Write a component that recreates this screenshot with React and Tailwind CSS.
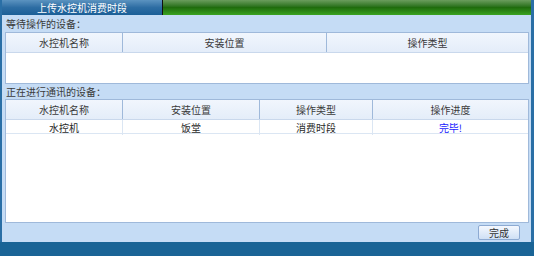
export default function App() {
  const font = { fontFamily: '"Noto Sans CJK SC", "Noto Sans", sans-serif' };
  const th = "flex items-center justify-center border-l border-[#9fb9da] first:border-l-0 text-[10px] text-[#3a3a3a]";
  const td = "flex items-center justify-center border-l border-[#dbe6f3] first:border-l-0 text-[10px] text-[#2a2a2a]";
  return (
    <div className="w-[534px] h-[256px] flex flex-col overflow-hidden" style={font}>
      <div className="h-[242px] flex">
        <div className="w-[2px] bg-[#2a6fa6]" />
        <div className="flex-1 flex flex-col bg-[#c5dcf5]">
          <div className="h-[15px] flex">
            <div className="w-[160px] bg-gradient-to-b from-[#5b93c0] via-[#2d6da3] to-[#1b5f97] flex items-center justify-center text-[10px] text-white leading-none">
              上传水控机消费时段
            </div>
            <div className="w-[1px] bg-[#111]" />
            <div className="flex-1 bg-gradient-to-b from-[#6a9d5c] via-[#1f6c0c] to-[#3aa321]" />
          </div>
          <div className="h-[17px] flex items-center pl-[4px] text-[10px] text-[#3a3a3a] leading-none">等待操作的设备：</div>
          <div className="ml-[3px] mr-[2px] h-[52px] border border-[#9fb9da] bg-white flex flex-col">
            <div className="h-[20px] grid grid-cols-[116px_204px_1fr] bg-gradient-to-b from-[#f1f6fd] to-[#e4edf9] border-b border-[#c9d8ec]">
              <div className={th}>水控机名称</div>
              <div className={th}>安装位置</div>
              <div className={th}>操作类型</div>
            </div>
          </div>
          <div className="h-[15px] flex items-center pl-[4px] text-[10px] text-[#3a3a3a] leading-none">正在进行通讯的设备：</div>
          <div className="ml-[3px] mr-[2px] h-[124px] border border-[#9fb9da] bg-white flex flex-col">
            <div className="h-[20px] grid grid-cols-[116px_137px_113px_1fr] bg-gradient-to-b from-[#f1f6fd] to-[#e4edf9] border-b border-[#c9d8ec]">
              <div className={th}>水控机名称</div>
              <div className={th}>安装位置</div>
              <div className={th}>操作类型</div>
              <div className={th}>操作进度</div>
            </div>
            <div className="h-[14px] grid grid-cols-[116px_137px_113px_1fr] border-b border-[#dbe6f3]">
              <div className={td}>水控机</div>
              <div className={td}>饭堂</div>
              <div className={td}>消费时段</div>
              <div className={td + " !text-[#1a1aff]"}>完毕!</div>
            </div>
          </div>
          <div className="flex-1 flex justify-end items-start pt-[2px] pr-[11px]">
            <button className="w-[42px] h-[15px] rounded-[2px] border border-[#8daad2] bg-gradient-to-b from-[#f4f8fe] to-[#cfe0f5] text-[10px] text-[#333] leading-none flex items-center justify-center">
              完成
            </button>
          </div>
        </div>
        <div className="w-[3px] bg-[#2a6fa6]" />
      </div>
      <div className="flex-1 bg-[#1a6496]" />
    </div>
  );
}
